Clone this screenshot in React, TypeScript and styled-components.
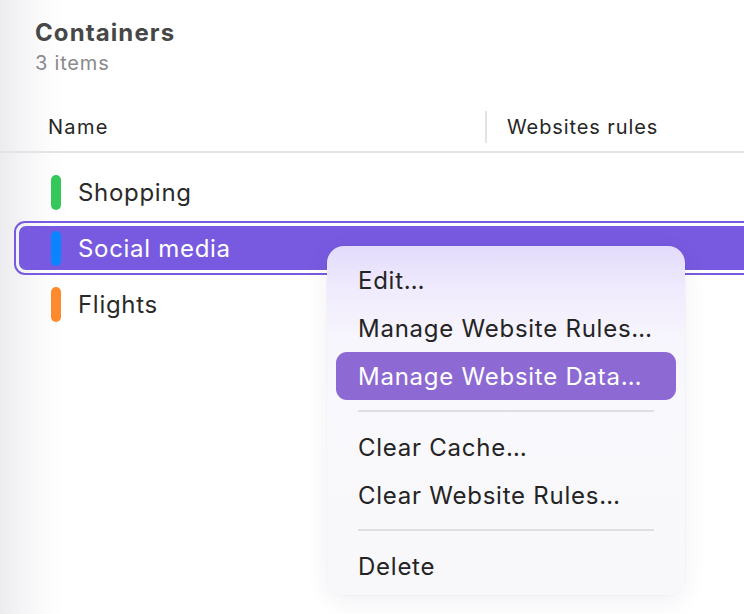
import React from 'react'
import styled, { createGlobalStyle } from 'styled-components'

const GlobalStyle = createGlobalStyle`
  html, body {
    margin: 0;
    padding: 0;
    height: 100%;
    overflow: hidden;
  }
  body {
    font-family: Inter, "Noto Sans", "Liberation Sans", sans-serif;
    background: linear-gradient(90deg, #ececee 0px, #f5f5f7 24px, #fcfcfd 48px, #ffffff 64px);
    -webkit-font-smoothing: antialiased;
  }
`

const Page = styled.div`
  position: relative;
  width: 744px;
  height: 614px;
  overflow: hidden;
`

const Heading = styled.div`
  padding: 18px 0 0 35px;
  display: flex;
  flex-direction: column;
  gap: 2px;
`

const Title = styled.div`
  font-size: 24px;
  font-weight: 700;
  letter-spacing: 1.1px;
  color: #474747;
  line-height: 30px;
`

const Subtitle = styled.div`
  font-size: 20px;
  letter-spacing: 0.8px;
  color: #8a8a8c;
  line-height: 26px;
`

const TableHeader = styled.div`
  margin-top: 27px;
  height: 48px;
  display: grid;
  grid-template-columns: 485px 1fr;
  align-items: center;
  border-bottom: 2px solid #e4e4e6;
`

const HeaderCell = styled.div<{ $divider?: boolean }>`
  height: 32px;
  display: flex;
  align-items: center;
  padding-left: ${p => (p.$divider ? '20px' : '48px')};
  font-size: 20px;
  letter-spacing: ${p => (p.$divider ? '0.9px' : '1.3px')};
  color: #262626;
  border-left: ${p => (p.$divider ? '2px solid #e4e4e6' : 'none')};
`

const List = styled.div`
  padding-top: 11px;
  display: flex;
  flex-direction: column;
`

const Row = styled.div`
  height: 56px;
  padding: 1px 0 1px 14px;
  box-sizing: border-box;
  margin-right: -40px;
`

const Ring = styled.div<{ $selected?: boolean }>`
  height: 54px;
  box-sizing: border-box;
  border: 2px solid ${p => (p.$selected ? '#785ae0' : 'transparent')};
  border-radius: 11px;
  padding: 3px;
`

const RowBody = styled.div<{ $selected?: boolean }>`
  height: 100%;
  border-radius: 7px;
  background: ${p => (p.$selected ? '#785ae0' : 'transparent')};
  display: flex;
  align-items: center;
  padding-left: 32px;
  gap: 17px;
  font-size: 24px;
  letter-spacing: 0.7px;
  color: ${p => (p.$selected ? '#ffffff' : '#2a2a2a')};
`

const ColorBar = styled.span<{ $color: string }>`
  width: 10px;
  height: 35px;
  border-radius: 5px;
  background: ${p => p.$color};
  flex: none;
`

const Menu = styled.div`
  position: absolute;
  left: 327px;
  top: 246px;
  width: 358px;
  box-sizing: border-box;
  padding: 10px 9px 5px;
  border-radius: 17px;
  background: linear-gradient(180deg, #e3dbfb 0px, #efeafd 40px, #f7f5fd 90px, #f9f8fc 160px, #f8f8fa 100%);
  box-shadow: 0 6px 24px rgba(40, 30, 80, 0.07), 0 0 0 0.5px rgba(0, 0, 0, 0.04);
  display: flex;
  flex-direction: column;
`

const MenuItem = styled.div<{ $active?: boolean }>`
  height: 48px;
  display: flex;
  align-items: center;
  padding-left: 22px;
  border-radius: 11px;
  font-size: 24px;
  letter-spacing: 0.75px;
  color: ${p => (p.$active ? '#ffffff' : '#242424')};
  background: ${p => (p.$active ? '#8c69d3' : 'transparent')};
`

const MenuSeparator = styled.div`
  height: 2px;
  margin: 10px 22px 11px 22px;
  background: #dfdee3;
`

const rows = [
  { name: 'Shopping', color: '#34c759' },
  { name: 'Social media', color: '#0a84ff', selected: true },
  { name: 'Flights', color: '#fe8a2e' },
]

export default function App() {
  return (
    <Page>
      <GlobalStyle />
      <Heading>
        <Title>Containers</Title>
        <Subtitle>3 items</Subtitle>
      </Heading>
      <TableHeader>
        <HeaderCell>Name</HeaderCell>
        <HeaderCell $divider>Websites rules</HeaderCell>
      </TableHeader>
      <List>
        {rows.map(r => (
          <Row key={r.name}>
            <Ring $selected={r.selected}>
              <RowBody $selected={r.selected}>
                <ColorBar $color={r.color} />
                {r.name}
              </RowBody>
            </Ring>
          </Row>
        ))}
      </List>
      <Menu>
        <MenuItem>Edit…</MenuItem>
        <MenuItem>Manage Website Rules…</MenuItem>
        <MenuItem $active>Manage Website Data…</MenuItem>
        <MenuSeparator />
        <MenuItem>Clear Cache…</MenuItem>
        <MenuItem>Clear Website Rules…</MenuItem>
        <MenuSeparator />
        <MenuItem>Delete</MenuItem>
      </Menu>
    </Page>
  )
}
